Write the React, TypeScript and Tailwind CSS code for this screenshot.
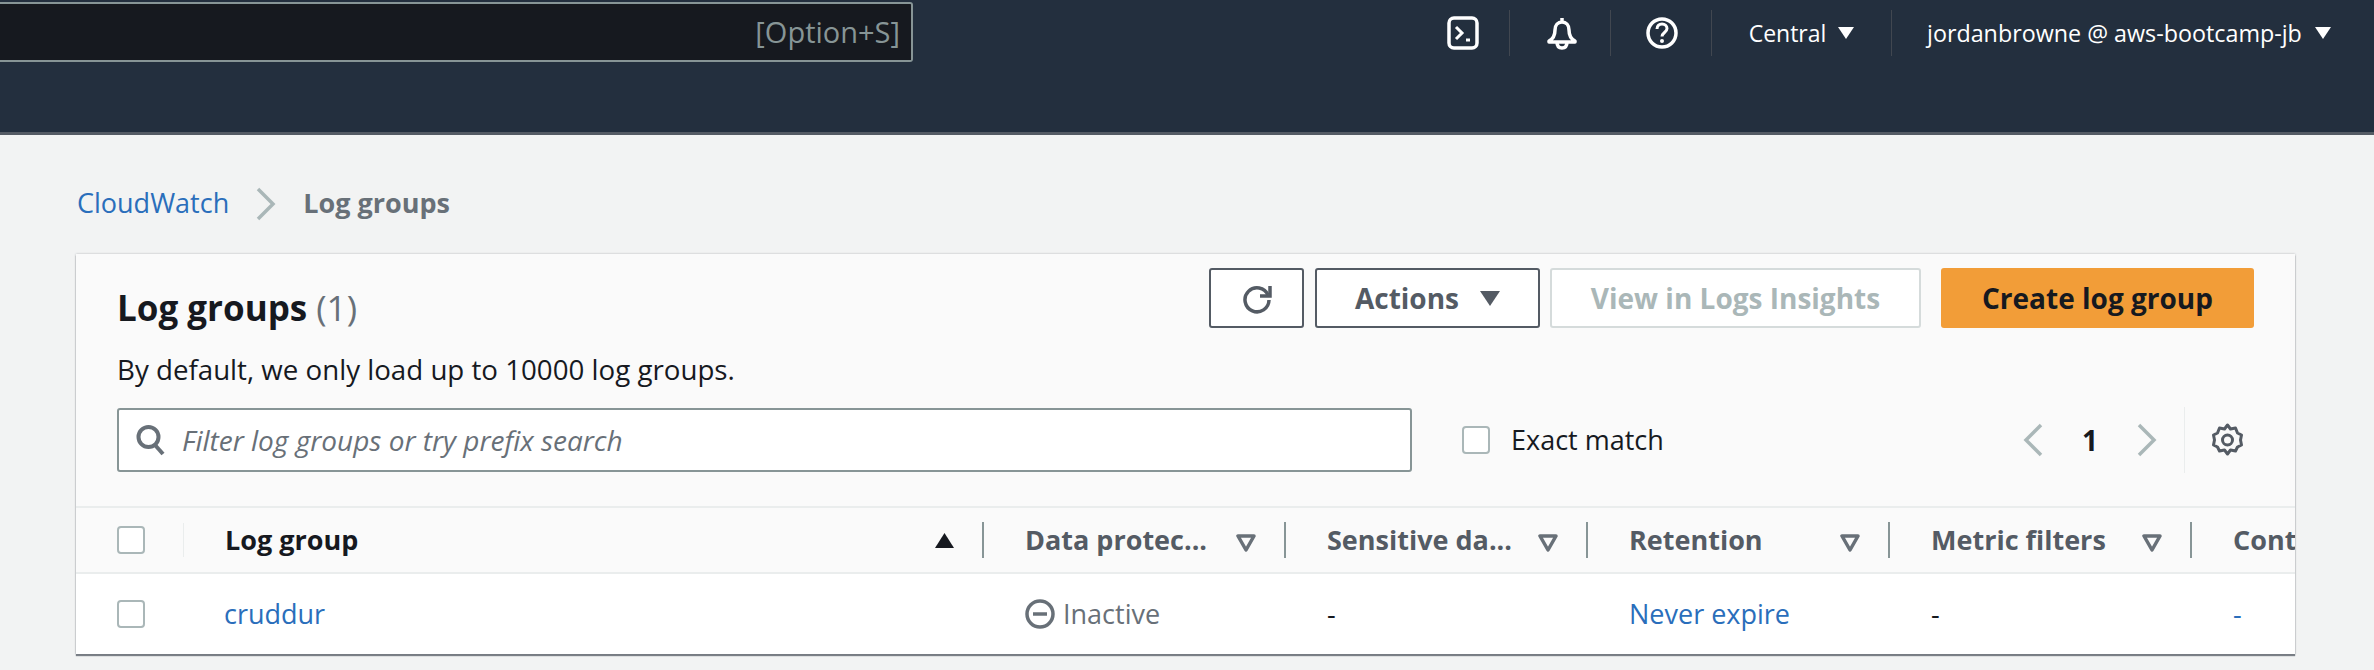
import type { ReactNode } from 'react'

function TerminalIcon() {
  return (
    <svg width="32" height="34" viewBox="0 0 32 34" fill="none" stroke="white" strokeWidth="3.500">
      <rect x="2" y="2" width="28" height="30" rx="5" />
      <path d="M9 11l6 6-6 6" strokeWidth="3" />
      <path d="M19 24h4" strokeWidth="3" />
    </svg>
  )
}

function BellIcon() {
  return (
    <svg width="32" height="34" viewBox="0 0 32 34" fill="none" stroke="white" strokeWidth="3.500">
      <path d="M16 2v3M9 14c0-5 3-8 7-8s7 3 7 8c0 6 2 9 6 11v1H3v-1c4-2 6-5 6-11z" strokeLinejoin="round" />
      <path d="M11 26c0 4 2 6 5 6s5-2 5-6" />
    </svg>
  )
}

function HelpIcon() {
  return (
    <svg width="32" height="34" viewBox="0 0 32 34" fill="none" stroke="white" strokeWidth="3.500">
      <circle cx="16" cy="17" r="14" />
      <path d="M11 13c0-3 2-5 5-5s5 2 5 4.500c0 4-5 4-5 8" strokeWidth="3" />
      <circle cx="16" cy="25" r="2" fill="white" stroke="none" />
    </svg>
  )
}

function Caret({ color = 'white', w = 16, h = 12, up }: { color?: string; w?: number; h?: number; up?: boolean }) {
  return (
    <svg width={w} height={h} viewBox="0 0 18 14" preserveAspectRatio="none" className={`shrink-0 ${up ? 'rotate-180' : ''}`}>
      <path d="M0 0h18L9 14z" fill={color} />
    </svg>
  )
}

function Divider() {
  return <div className="h-[46px] w-[1px] shrink-0 bg-[#414750]" />
}

function Checkbox() {
  return <div className="h-[28px] w-[28px] shrink-0 rounded-[4px] border-2 border-[#aab7b8] bg-white" />
}

function SortFilter() {
  return (
    <svg width="20" height="18" viewBox="0 0 20 18" fill="none" stroke="#687078" strokeWidth="3.500" className="mt-[6px] shrink-0">
      <path d="M2 2h16L10 16z" strokeLinejoin="round" />
    </svg>
  )
}

function HeaderCell({ children, last, dark, sort }: { children: ReactNode; last?: boolean; dark?: boolean; sort?: ReactNode }) {
  return (
    <div className={`flex h-[36px] w-full items-center justify-between pl-[41px] pr-[28px] ${last ? '' : 'border-r-2 border-[#879596]'}`}>
      <span className={`whitespace-nowrap text-[27px] font-bold ${dark ? 'text-[#16191f]' : 'text-[#545b64]'}`}>{children}</span>
      {!last && sort}
    </div>
  )
}

export default function App() {
  return (
    <div className="h-[670px] w-[2374px] overflow-hidden bg-[#f2f3f3] font-['Open_Sans',sans-serif] text-[27px] text-[#16191f]">
      <header className="flex h-[135px] items-start border-b-[3px] border-[#545b64] bg-[#232f3e]">
        <div className="mt-[2px] flex h-[60px] w-[913px] items-center justify-end rounded-r-[3px] border-y-2 border-r-2 border-[#879596] bg-[#16191f] pr-[11px] text-[29px] text-[#879596]">
          [Option+S]
        </div>
        <nav className="ml-auto mt-[10px] flex h-[46px] items-center text-white">
          <div className="pr-[30px]"><TerminalIcon /></div>
          <Divider />
          <div className="flex w-[100px] justify-center pl-[3px]"><BellIcon /></div>
          <Divider />
          <div className="flex w-[100px] justify-center pl-[2px]"><HelpIcon /></div>
          <Divider />
          <div className="flex w-[179px] items-center justify-center gap-[12px]">
            <span className="text-[23px]">Central</span>
            <Caret />
          </div>
          <Divider />
          <div className="flex w-[482px] items-center gap-[13px] pl-[35px]">
            <span className="whitespace-nowrap text-[23.3px]">jordanbrowne @ aws-bootcamp-jb</span>
            <Caret />
          </div>
        </nav>
      </header>

      <div className="flex h-[119px] items-center gap-[27px] pl-[77px] pt-[18px]">
        <a className="text-[#2a6ebb]">CloudWatch</a>
        <svg width="20" height="34" viewBox="0 0 20 34" fill="none" stroke="#aab7b8" strokeWidth="3.500">
          <path d="M2 2l15 15L2 32" />
        </svg>
        <span className="font-bold text-[#687078]">Log groups</span>
      </div>

      <main className="ml-[76px] mr-[79px] h-[400px] overflow-hidden bg-white shadow-[0_2px_1px_rgba(84,91,100,0.75),0_0_2px_rgba(84,91,100,0.4)]">
        <div className="h-[252px] bg-[#fafafa] px-[41px] pt-[14px]">
          <div className="flex justify-between">
            <div className="pt-[18px]">
              <h1 className="text-[35px] font-bold leading-[44px]">
                Log groups <span className="font-normal text-[#687078]">(1)</span>
              </h1>
              <p className="mt-[22px] text-[27.7px] leading-[34px]">By default, we only load up to 10000 log groups.</p>
            </div>
            <div className="flex h-[60px] items-stretch text-[28px] font-bold">
              <button className="flex w-[95px] items-center justify-center rounded-[3px] border-2 border-[#545b64] bg-white">
                <svg width="32" height="32" viewBox="0 0 32 32" fill="none" stroke="#545b64" strokeWidth="3.500">
                  <path d="M27 13a12 12 0 1 0 1 5" />
                  <path d="M29 4v10H19" />
                </svg>
              </button>
              <button className="ml-[11px] flex w-[225px] items-center justify-center gap-[21px] rounded-[3px] border-2 border-[#545b64] bg-white text-[#545b64]">
                Actions
                <Caret color="#545b64" w={20} h={15} />
              </button>
              <button className="ml-[10px] w-[371px] rounded-[3px] border-2 border-[#d5dbdb] bg-white text-[#aab7b8]">
                View in Logs Insights
              </button>
              <button className="ml-[20px] w-[313px] rounded-[3px] bg-[#f29d38] text-[#16191f]">Create log group</button>
            </div>
          </div>

          <div className="mt-[21px] flex h-[66px] items-center">
            <div className="flex h-[64px] w-[1295px] items-center gap-[16px] rounded-[3px] border-2 border-[#879596] bg-white pl-[17px]">
              <svg width="30" height="32" viewBox="0 0 30 32" fill="none" stroke="#687078" strokeWidth="4" className="shrink-0">
                <circle cx="12.500" cy="13" r="10" />
                <path d="M19 21l8 9" />
              </svg>
              <span className="text-[28px] italic text-[#687078]">Filter log groups or try prefix search</span>
            </div>
            <div className="ml-[50px]"><Checkbox /></div>
            <span className="ml-[21px]">Exact match</span>
            <div className="ml-auto mr-[10px] flex items-center">
              <svg width="20" height="34" viewBox="0 0 20 34" fill="none" stroke="#aab7b8" strokeWidth="3.500">
                <path d="M18 2L3 17l15 15" />
              </svg>
              <span className="mx-[39px] text-[28px] font-bold">1</span>
              <svg width="20" height="34" viewBox="0 0 20 34" fill="none" stroke="#aab7b8" strokeWidth="3.500">
                <path d="M2 2l15 15L2 32" />
              </svg>
              <div className="ml-[27px] h-[66px] w-[1px] bg-[#eaeded]" />
              <svg width="33" height="34" viewBox="0 0 30 34" fill="none" stroke="#545b64" strokeWidth="3" className="ml-[26px]">
                <path d="M15 2l3 4 5-1 2 5 4 2-1 5 1 5-4 2-2 4-5-1-3 4-3-4-5 1-2-4-4-2 1-5-1-5 4-2 2-5 5 1z" strokeLinejoin="round" />
                <circle cx="15" cy="17" r="5" />
              </svg>
            </div>
          </div>
        </div>

        <div className="grid grid-cols-[108px_800px_302px_302px_302px_302px_302px] border-y-[2px] border-[#eaeded] bg-[#fafafa]">
          <div className="flex h-[64px] items-center pl-[41px]">
            <Checkbox />
            <div className="ml-[38px] h-[34px] w-[1px] bg-[#eaeded]" />
          </div>
          <div className="flex items-center">
            <HeaderCell dark sort={<Caret color="#16191f" w={19} h={15} up />}>Log group</HeaderCell>
          </div>
          {['Data protec...', 'Sensitive da...', 'Retention', 'Metric filters', 'Cont'].map((title, i) => (
            <div key={title} className="flex items-center overflow-hidden">
              <HeaderCell last={i === 4} sort={<SortFilter />}>{title}</HeaderCell>
            </div>
          ))}
        </div>

        <div className="grid h-[80px] grid-cols-[108px_800px_302px_302px_302px_302px_302px] items-center bg-white">
          <div className="pl-[41px]"><Checkbox /></div>
          <a className="pl-[40px] text-[#2a6ebb]">cruddur</a>
          <div className="flex items-center gap-[8px] pl-[41px] text-[#687078]">
            <svg width="30" height="32" viewBox="0 0 30 32" fill="none" stroke="#687078" strokeWidth="3.500" className="shrink-0">
              <circle cx="15" cy="16" r="13" />
              <path d="M8 16h14" />
            </svg>
            Inactive
          </div>
          <div className="pl-[41px]">-</div>
          <a className="pl-[41px] text-[#2a6ebb]">Never expire</a>
          <div className="pl-[41px]">-</div>
          <a className="pl-[41px] text-[#2a6ebb]">-</a>
        </div>
      </main>
    </div>
  )
}
